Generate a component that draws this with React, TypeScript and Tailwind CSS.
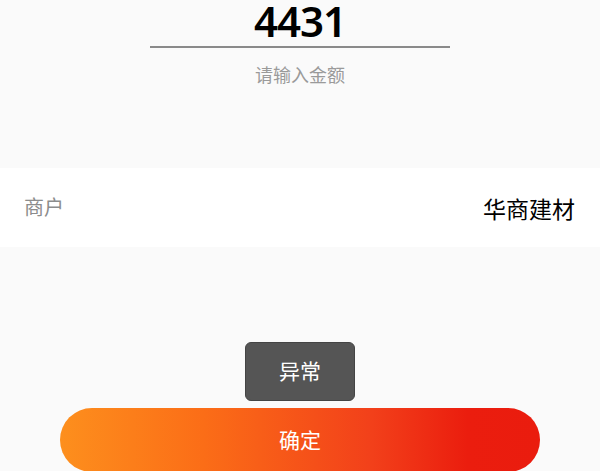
export default function App() {
  return (
    <div
      className="relative w-[600px] h-[471px] overflow-hidden bg-[#fafafa]"
      style={{ fontFamily: '"Noto Sans", "Noto Sans CJK SC", sans-serif' }}
    >
      <div className="flex flex-col items-center">
        <div className="h-[46px] flex items-start justify-center">
          <span className="text-[42px] font-semibold leading-none tracking-[-1px] text-black">
            4431
          </span>
        </div>
        <div className="w-[300px] h-[2px] bg-[#8a8a8a]" />
        <div className="mt-[17px] h-[20px] flex items-center text-[18px] leading-none text-[#9a9a9a]">
          请输入金额
        </div>
      </div>
      <div className="mt-[83px] h-[79px] bg-white flex items-center justify-between pl-[24px] pr-[25px]">
        <span className="text-[20px] leading-none text-[#8c8c8c]">商户</span>
        <span className="text-[23px] leading-none text-black mt-[3px]">华商建材</span>
      </div>
      <div className="mt-[161px] flex justify-center">
        <button className="w-[480px] h-[64px] rounded-full text-white text-[21px] leading-none bg-[linear-gradient(90deg,#fd8f1d_0%,#fb6d17_30%,#f2401a_65%,#eb1d0e_85%,#ea1c0e_100%)]">
          确定
        </button>
      </div>
      <div className="absolute left-[245px] top-[342px] w-[110px] h-[59px] rounded-[6px] bg-[#555555] border border-[#444] flex items-center justify-center text-white text-[21px] leading-none">
        异常
      </div>
    </div>
  );
}
